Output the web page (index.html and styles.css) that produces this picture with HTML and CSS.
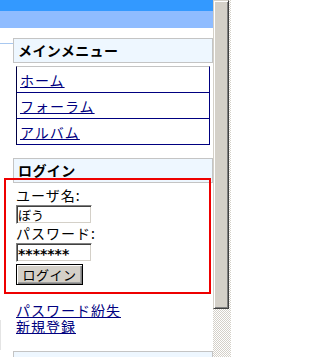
FILE: index.html
```html
<!DOCTYPE html>
<html lang="ja">
<head>
<meta charset="utf-8">
<link rel="stylesheet" href="styles.css">
</head>
<body>
<div class="window">
  <div class="page">
    <div class="topbar"></div>
    <div class="subbar"></div>
    <div class="content">
      <div class="gutter"><div class="gutter-line"></div><div class="gutter-edge"></div></div>
      <div class="side">
        <div class="block-title">メインメニュー</div>
        <ul class="menu">
          <li><a href="#">ホーム</a></li>
          <li><a href="#">フォーラム</a></li>
          <li><a href="#">アルバム</a></li>
        </ul>
        <div class="block-title login-title">ログイン</div>
        <form class="login">
          <div class="label">ユーザ名:</div>
          <input class="field" type="text" value="ぼう">
          <div class="label">パスワード:</div>
          <input class="field pass" type="text" value="*******">
          <button class="btn" type="button">ログイン</button>
        </form>
        <div class="links">
          <a href="#">パスワード紛失</a>
          <a href="#">新規登録</a>
        </div>
        <div class="block-title next-title">検索</div>
      </div>
    </div>
    <div class="highlight"></div>
  </div>
  <div class="scrollbar"><div class="thumb"></div><div class="track"></div></div>
</div>
</body>
</html>
```
FILE: styles.css
```css
html, body {
  margin: 0;
  padding: 0;
  background: #ffffff;
}
body {
  width: 231px;
  height: 357px;
  overflow: hidden;
  font-family: "Noto Sans CJK JP", "Liberation Sans", sans-serif;
}
.window {
  display: flex;
  width: 231px;
  height: 357px;
}
.page {
  position: relative;
  width: 213px;
  flex: none;
  overflow: hidden;
}
.topbar {
  height: 11px;
  background: #3399ff;
}
.subbar {
  height: 17px;
  background: #8fbcff;
}
.content {
  display: flex;
}
.gutter {
  width: 13px;
  flex: none;
  display: flex;
  flex-direction: column;
}
.gutter-line {
  margin-top: 15px;
  height: 1px;
  background: #a8c8f0;
}
.gutter-edge {
  margin-top: 276px;
  width: 1px;
  height: 30px;
  background: #e4e4e4;
}
.side {
  width: 200px;
  flex: none;
  padding-top: 10px;
}
.block-title {
  height: 23px;
  line-height: 23px;
  border: 1px solid #c4c4c4;
  background: #eef7ff;
  font-size: 14px;
  font-weight: bold;
  letter-spacing: 0.4px;
  padding-left: 4px;
  color: #000;
}
.menu {
  list-style: none;
  margin: 3px 3px 0 3px;
  padding: 0;
  border-top: 1px solid #c4c4c4;
  border-left: 1px solid #000044;
  border-right: 1px solid #000080;
}
.menu li {
  height: 25px;
  line-height: 24px;
  border-bottom: 1px solid #000080;
  padding-left: 3px;
}
.menu a, .links a {
  color: #000080;
  font-size: 14px;
  letter-spacing: 1px;
  text-decoration: underline;
}
.login-title {
  margin-top: 13px;
}
.login {
  display: flex;
  flex-direction: column;
  align-items: flex-start;
  padding: 3px 0 0 3px;
  margin: 0;
}
.label {
  font-size: 14px;
  letter-spacing: 1px;
  line-height: 18px;
  height: 19px;
  color: #000;
}
.field {
  box-sizing: border-box;
  width: 76px;
  height: 19px;
  margin: 0;
  padding: 0 0 0 1px;
  border: 1px solid;
  border-color: #808080 #ffffff #ffffff #808080;
  box-shadow: inset 1px 1px #404040, inset -1px -1px #d4d0c8;
  font-family: "Noto Sans CJK JP", sans-serif;
  font-size: 13px;
  line-height: 15px;
  color: #000;
  background: #fff;
  outline: none;
}
.pass {
  font-family: "DejaVu Sans", sans-serif;
  font-weight: bold;
  font-size: 14px;
  letter-spacing: 0;
  padding-top: 3px;
}
.btn {
  box-sizing: border-box;
  margin-top: 2px;
  width: 67px;
  height: 21px;
  padding: 0;
  border: 1px solid #000;
  box-shadow: inset 1px 1px #ffffff, inset -1px -1px #808080, inset -2px -2px #a0a0a0;
  background: #d4d0c8;
  font-family: "Noto Sans CJK JP", sans-serif;
  font-size: 13px;
  letter-spacing: 0.5px;
  color: #000;
}
.links {
  display: flex;
  flex-direction: column;
  align-items: flex-start;
  padding: 17px 0 0 3px;
}
.links a {
  display: block;
  height: 16px;
  line-height: 16px;
}
.next-title {
  margin-top: 17px;
}
.highlight {
  position: absolute;
  left: 4px;
  top: 178px;
  width: 203px;
  height: 112px;
  border: 2px solid #ee0000;
  pointer-events: none;
}
.scrollbar {
  width: 18px;
  flex: none;
  display: flex;
  flex-direction: column;
  background-color: #ffffff;
  background-image: repeating-conic-gradient(#d4d0c8 0 25%, #ffffff 0 50%);
  background-size: 2px 2px;
}
.thumb {
  box-sizing: border-box;
  width: 16px;
  height: 309px;
  background: #d4d0c8;
  border: 1px solid;
  border-color: #d4d0c8 #404040 #404040 #d4d0c8;
  box-shadow: inset 1px 1px #ffffff, inset -1px -1px #808080;
}
.track {
  flex: 1;
}
```
